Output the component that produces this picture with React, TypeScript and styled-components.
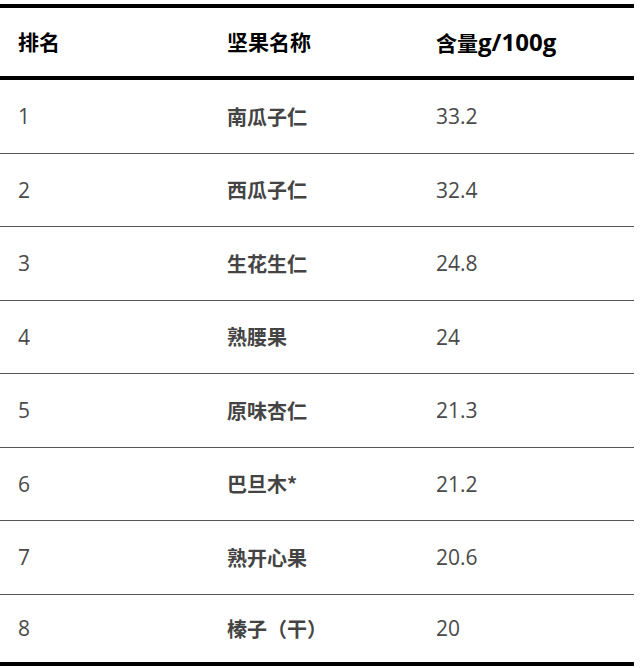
import React from "react";
import styled, { createGlobalStyle } from "styled-components";

const GlobalStyle = createGlobalStyle`
  html, body { margin: 0; padding: 0; background: #ffffff; }
  body { font-family: "Open Sans", "Noto Sans CJK SC", sans-serif; }
`;

const Page = styled.div`
  padding-top: 4px;
  width: 634px;
`;

const Table = styled.div`
  display: flex;
  flex-direction: column;
  border-top: 4px solid #000;
  border-bottom: 4px solid #000;
`;

const Row = styled.div<{ $h: number; $header?: boolean; $divider?: boolean }>`
  box-sizing: border-box;
  display: grid;
  grid-template-columns: 209px 209px 1fr;
  align-items: center;
  padding-left: 18px;
  height: ${(p) => p.$h}px;
  border-bottom: ${(p) =>
    p.$header ? "4px solid #000" : p.$divider ? "1.5px solid #555" : "none"};
`;

const HeadCell = styled.div`
  font-family: "Open Sans", "Noto Sans CJK SC", sans-serif;
  font-weight: 700;
  font-size: 21px;
  color: #000;
  line-height: 1;
`;

const HeadLatin = styled.span`
  font-size: 24px;
`;

const NumCell = styled.div`
  font-family: "Open Sans", "Noto Sans CJK SC", sans-serif;
  font-weight: 400;
  font-size: 21px;
  color: #4a4a4a;
`;

const NameCell = styled.div`
  font-family: "Noto Sans CJK SC", sans-serif;
  font-weight: 700;
  font-size: 20px;
  color: #444;
`;

const data: [string, string][] = [
  ["南瓜子仁", "33.2"],
  ["西瓜子仁", "32.4"],
  ["生花生仁", "24.8"],
  ["熟腰果", "24"],
  ["原味杏仁", "21.3"],
  ["巴旦木*", "21.2"],
  ["熟开心果", "20.6"],
  ["榛子（干）", "20"],
];

export default function App() {
  return (
    <Page>
      <GlobalStyle />
      <Table>
        <Row $h={72} $header>
          <HeadCell>排名</HeadCell>
          <HeadCell>坚果名称</HeadCell>
          <HeadCell>
            含量<HeadLatin>g/100g</HeadLatin>
          </HeadCell>
        </Row>
        {data.map(([name, val], i) => {
          const last = i === data.length - 1;
          return (
            <Row key={i} $h={last ? 67.5 : 73.5} $divider={!last}>
              <NumCell>{i + 1}</NumCell>
              <NameCell>{name}</NameCell>
              <NumCell>{val}</NumCell>
            </Row>
          );
        })}
      </Table>
    </Page>
  );
}
